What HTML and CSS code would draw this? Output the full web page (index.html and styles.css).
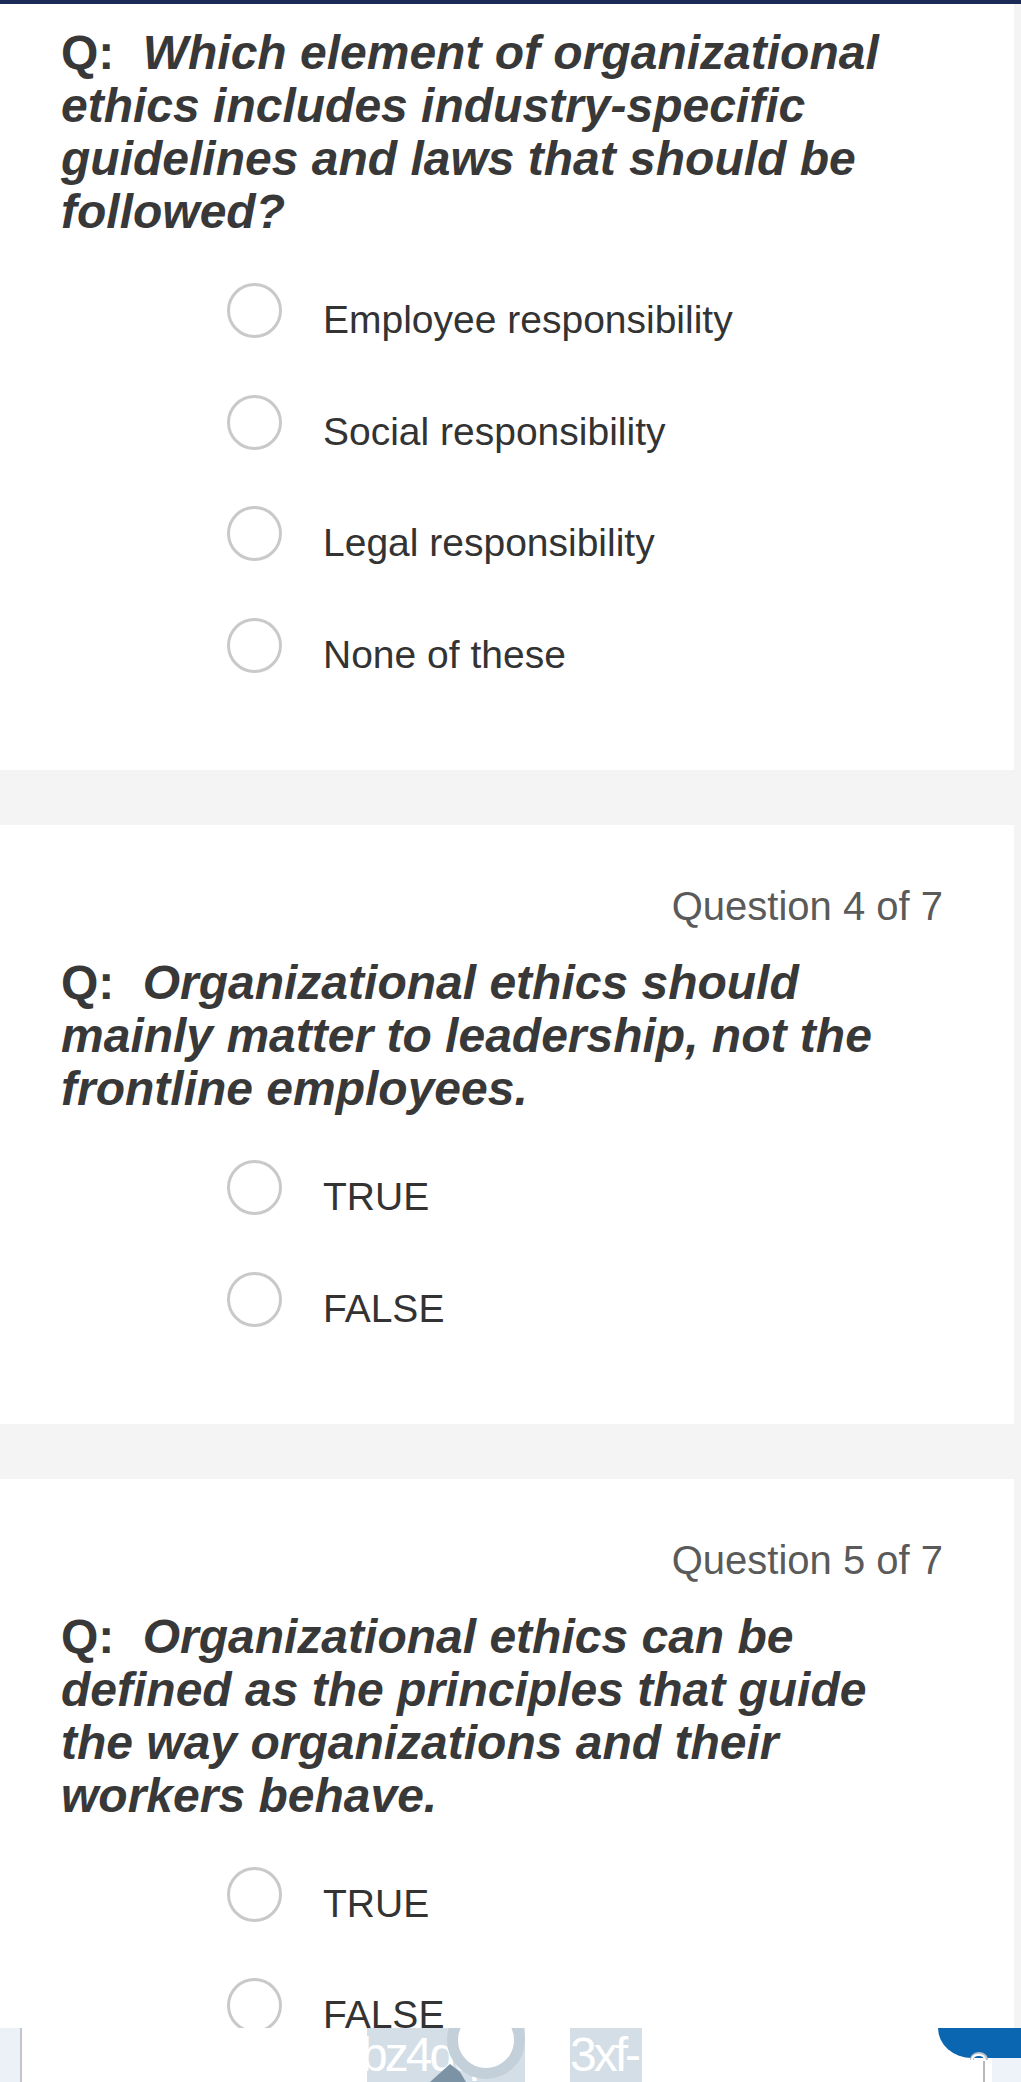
FILE: index.html
```html
<!DOCTYPE html>
<html lang="en">
<head>
<meta charset="utf-8">
<title>Quiz</title>
<link rel="stylesheet" href="styles.css">
</head>
<body>
<div class="topbar"></div>
<main class="quiz">
  <section class="card card-first">
    <p class="question"><span class="q-label">Q:</span> <em>Which element of organizational ethics includes industry-specific guidelines and laws that should be followed?</em></p>
    <ul class="options">
      <li class="option"><span class="radio"></span><span class="option-label">Employee responsibility</span></li>
      <li class="option"><span class="radio"></span><span class="option-label">Social responsibility</span></li>
      <li class="option"><span class="radio"></span><span class="option-label">Legal responsibility</span></li>
      <li class="option"><span class="radio"></span><span class="option-label">None of these</span></li>
    </ul>
  </section>
  <section class="card">
    <p class="counter">Question 4 of 7</p>
    <p class="question"><span class="q-label">Q:</span> <em>Organizational ethics should mainly matter to leadership, not the frontline employees.</em></p>
    <ul class="options">
      <li class="option"><span class="radio"></span><span class="option-label">TRUE</span></li>
      <li class="option"><span class="radio"></span><span class="option-label">FALSE</span></li>
    </ul>
  </section>
  <section class="card card-last">
    <p class="counter">Question 5 of 7</p>
    <p class="question"><span class="q-label">Q:</span> <em>Organizational ethics can be defined as the principles that guide the way organizations and their workers behave.</em></p>
    <ul class="options">
      <li class="option"><span class="radio"></span><span class="option-label">TRUE</span></li>
      <li class="option"><span class="radio"></span><span class="option-label">FALSE</span></li>
    </ul>
  </section>
</main>
<div class="bottom-bar">
  <span class="bb-tint-left"></span>
  <span class="bb-line"></span>
  <span class="bb-chip bb-chip-a">bz4dq</span>
  <span class="bb-ring"></span>
  <svg class="bb-wedge" width="40" height="20" viewBox="0 0 40 20"><polygon points="0,20 20,2 30,10 36,20" fill="#7c93a6"/></svg>
  <span class="bb-chip bb-chip-b">3xf-</span>
  <span class="bb-tab"></span>
  <span class="bb-tint-right"></span>
  <svg class="bb-glyph" width="26" height="34" viewBox="0 0 26 34"><path d="M6 12 C6 4, 20 4, 20 12" fill="none" stroke="#b9c2ca" stroke-width="4"/><path d="M6 12 C6 5, 19 5, 19 12" fill="none" stroke="#ffffff" stroke-width="2"/><line x1="18" y1="13" x2="18" y2="34" stroke="#b5b8bc" stroke-width="2"/></svg>
</div>
</body>
</html>
```
FILE: styles.css
```css
html, body {
  margin: 0;
  padding: 0;
}

body {
  background: #f4f4f4;
  font-family: "Liberation Sans", Arial, Helvetica, sans-serif;
  color: #333333;
}

.topbar {
  height: 4px;
  background: #1b2a56;
}

.quiz {
  width: 1014px;
  display: flex;
  flex-direction: column;
  gap: 55px;
}

.card {
  background: #ffffff;
  padding: 59px 71px 97px 61px;
}

.card-first {
  padding-top: 22px;
}

.card-last {
  padding-bottom: 48px;
}

.counter {
  margin: 0;
  text-align: right;
  font-size: 40px;
  line-height: 44px;
  color: #5a5a5a;
}

.question {
  margin: 28px 0 0;
  padding-right: 30px;
  font-size: 48px;
  line-height: 53px;
  font-weight: 700;
  color: #383838;
}

.card-first .question {
  margin-top: 0;
}

.q-label {
  margin-right: 15px;
}

.question em {
  font-style: italic;
}

.options {
  list-style: none;
  margin: 45px 0 0;
  padding: 0 0 0 166px;
  display: flex;
  flex-direction: column;
  gap: 56.67px;
}

.option {
  display: flex;
  align-items: flex-start;
  gap: 41px;
}

.radio {
  flex: none;
  width: 55px;
  height: 55px;
  box-sizing: border-box;
  border: 3px solid #c9c9cc;
  border-radius: 50%;
  background: #ffffff;
}

.option-label {
  font-size: 39px;
  line-height: 37px;
  padding-top: 18px;
  color: #333333;
}

/* bottom overlay (floating player strip) */
.bottom-bar {
  position: fixed;
  left: 0;
  right: 0;
  bottom: 0;
  height: 54px;
  background: #ffffff;
  overflow: hidden;
}

.bottom-bar > * {
  position: absolute;
}

.bb-tint-left {
  left: 0;
  top: 0;
  width: 20px;
  height: 54px;
  background: #ebf1f7;
}

.bb-line {
  left: 20px;
  top: 0;
  width: 2px;
  height: 54px;
  background: #c3c5c8;
}

.bb-chip {
  top: 0;
  height: 54px;
  background: #d4dee7;
  color: #ffffff;
  font-size: 48px;
  line-height: 54px;
  letter-spacing: -3px;
  overflow: hidden;
  white-space: nowrap;
}

.bb-chip-a {
  left: 367px;
  width: 158px;
  text-indent: -6px;
}

.bb-chip-b {
  left: 570px;
  width: 72px;
}

.bb-ring {
  left: 447px;
  top: -27px;
  width: 78px;
  height: 78px;
  box-sizing: border-box;
  border: 11px solid #c3d0da;
  border-radius: 50%;
  background: #ffffff;
}

.bb-wedge {
  left: 430px;
  top: 34px;
}

.bb-tab {
  left: 938px;
  top: 0;
  width: 83px;
  height: 30px;
  background: #0a66b1;
  border-bottom-left-radius: 34px 30px;
}

.bb-tint-right {
  left: 992px;
  top: 30px;
  width: 29px;
  height: 24px;
  background: #edf3f8;
}

.bb-glyph {
  left: 966px;
  top: 20px;
}
```
